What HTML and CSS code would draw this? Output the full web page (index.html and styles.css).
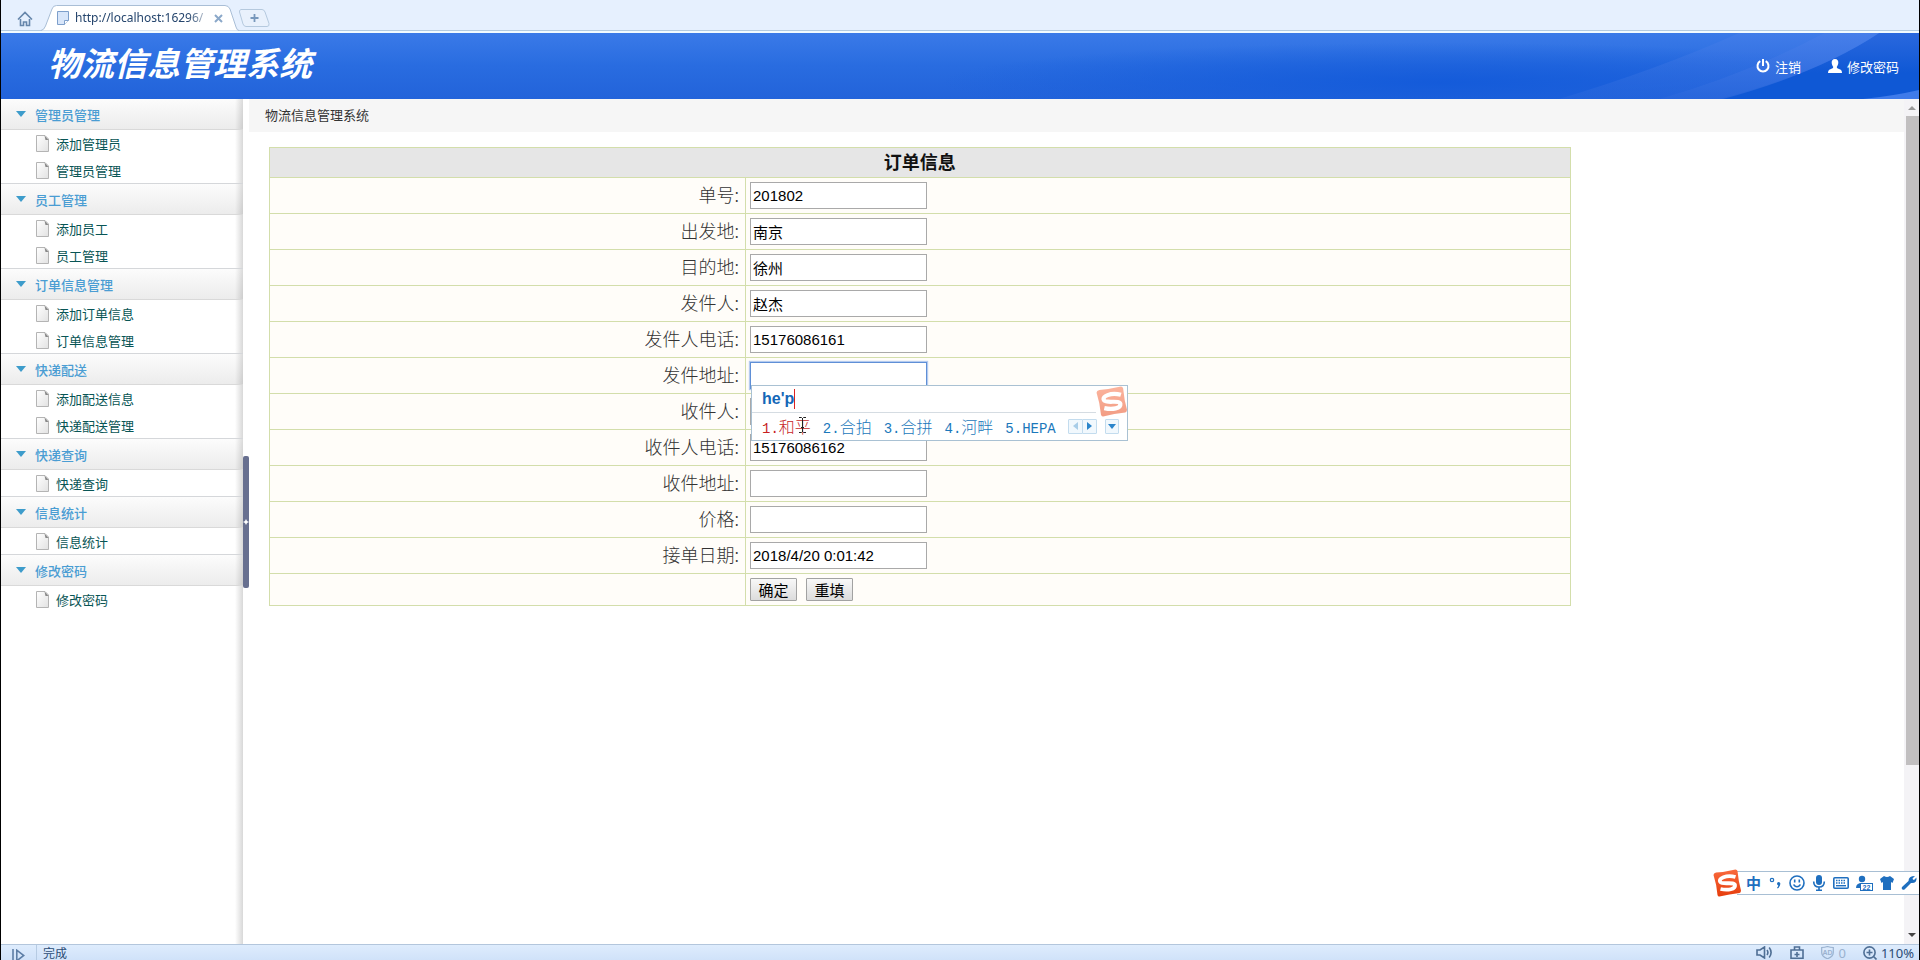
FILE: index.html
```html
<!DOCTYPE html>
<html lang="zh-CN">
<head>
<meta charset="utf-8">
<title>物流信息管理系统</title>
<link rel="stylesheet" href="styles.css">
</head>
<body>
<svg class="defs" aria-hidden="true">
  <linearGradient id="paper" x1="0" y1="0" x2="1" y2="1"><stop offset="0" stop-color="#fff"/><stop offset="1" stop-color="#e2e2e2"/></linearGradient>
  <linearGradient id="sogou" x1="0" y1="0" x2="0" y2="1"><stop offset="0" stop-color="#f96a3d"/><stop offset="1" stop-color="#e63d0c"/></linearGradient>
  <symbol id="page" viewBox="0 0 13 17"><path d="M.5.5h8.500l3.500 3.500v12.500H.5z" fill="url(#paper)" stroke="#b4b4b4"/><path d="M8.500.5l4 4.500H9.500z" fill="#888"/></symbol>
  <symbol id="s-logo" viewBox="0 0 28 28"><path d="M3 3.500Q12 3 22.500.5q1.500 0 2 1.500 1 11 3.500 19.500 0 2-1.500 2.500-10 1-20 3.500-1.500.3-2-1.500Q3.500 15 .5 6 .5 4 3 3.500z" fill="url(#sogou)"/><path d="M22.500 8Q16 6 10.500 8.200C5 10.500 6 14 11 14.200c5 .3 10.500-.8 11 2 .5 4-7 5.500-14.500 3.800" fill="none" stroke="#fff" stroke-width="3.800"/></symbol>
</svg>

<div class="window">
  <div class="tabs">
    <button class="plain home" aria-label="主页"><svg width="16" height="16" viewBox="0 0 16 16"><path d="M1 8.500L8 1.500l7 7M3.500 8v6.500h3V11h3v3.500h3V8" fill="none" stroke="#6686ab" stroke-width="1.600"/></svg></button>
    <div class="tab">
      <svg class="tab-shape" viewBox="0 0 198 26" preserveAspectRatio="none"><path d="M0 25.500Q3 25 4.500 21L11 4q1-3.500 4.500-3.500H184q3.500 0 5 3.500l6 18q1 3.500 3 3.500" fill="#fff" stroke="#a9bed6"/></svg>
      <svg width="12" height="14" viewBox="0 0 12 14"><path d="M.5.5h11v9l-4 4h-7z" fill="#d8e6fa" stroke="#7d9fcb"/><path d="M11.500 9.500h-4v4" fill="#fff" stroke="#7d9fcb"/></svg>
      <span class="url">http://localhost:16296/</span>
      <button class="plain close" aria-label="关闭标签"><svg width="9" height="9" viewBox="0 0 9 9"><path d="M1 1l7 7M8 1L1 8" stroke="#8ba8c9" stroke-width="2"/></svg></button>
    </div>
    <button class="plain newtab" aria-label="新标签"><svg width="31" height="18" viewBox="0 0 31 18"><path d="M2 .5h21q2 0 3 2.500l4 11.500q.5 3-2 3H7q-2 0-3-2.500L.5 3Q0 1 2 .5z" fill="#e9f1fc" stroke="#b5c9de"/><path d="M15.500 5v8M11.500 9h8" stroke="#7898bc" stroke-width="1.800"/></svg></button>
  </div>

  <header class="banner">
    <svg class="rays" viewBox="0 0 420 66" preserveAspectRatio="none"><defs><linearGradient id="ray" x1="0" y1="0" x2="0" y2="1"><stop offset="0" stop-color="#4a80ea"/><stop offset="1" stop-color="#2b68dc"/></linearGradient><linearGradient id="deep" x1="0" y1="0" x2="0" y2="1"><stop offset="0" stop-color="#2a68de"/><stop offset=".6" stop-color="#0f58d5"/></linearGradient></defs><path d="M220 66Q320 40 380 0h40v66z" fill="url(#deep)"/><path d="M160 66Q250 40 325 0h55Q320 40 224 66z" fill="url(#ray)" opacity=".8"/><path d="M60 66Q160 36 240 0h85Q250 40 160 66z" fill="url(#ray)" opacity=".45"/><path d="M364 66q30-3 56-9v9z" fill="#3f7bea"/></svg>
    <h1>物流信息管理系统</h1>
    <nav class="account">
      <a href="#"><svg width="14" height="14" viewBox="0 0 14 14"><path d="M4.300 2.200a5.500 5.500 0 1 0 5.400 0M7 0v7" fill="none" stroke="#fff" stroke-width="2"/></svg>注销</a>
      <a href="#"><svg width="14" height="14" viewBox="0 0 14 14"><path d="M7 0c2.500 0 3.500 1.700 3.300 4-.2 2-1 3-1.500 3.800 0 1.500.7 1.700 2.200 2.200 2 .7 3 1.500 3 4H0c0-2.500 1-3.300 3-4 1.500-.5 2.200-.7 2.200-2.200C4.700 7 3.900 6 3.700 4 3.500 1.700 4.500 0 7 0z" fill="#fff"/></svg>修改密码</a>
    </nav>
  </header>

  <div class="body">
    <aside class="sidebar">
      <section><h2>管理员管理</h2><ul><li><a href="#"><svg class="page"><use href="#page"/></svg>添加管理员</a></li><li><a href="#"><svg class="page"><use href="#page"/></svg>管理员管理</a></li></ul></section>
      <section><h2>员工管理</h2><ul><li><a href="#"><svg class="page"><use href="#page"/></svg>添加员工</a></li><li><a href="#"><svg class="page"><use href="#page"/></svg>员工管理</a></li></ul></section>
      <section><h2>订单信息管理</h2><ul><li><a href="#"><svg class="page"><use href="#page"/></svg>添加订单信息</a></li><li><a href="#"><svg class="page"><use href="#page"/></svg>订单信息管理</a></li></ul></section>
      <section><h2>快递配送</h2><ul><li><a href="#"><svg class="page"><use href="#page"/></svg>添加配送信息</a></li><li><a href="#"><svg class="page"><use href="#page"/></svg>快递配送管理</a></li></ul></section>
      <section><h2>快递查询</h2><ul><li><a href="#"><svg class="page"><use href="#page"/></svg>快递查询</a></li></ul></section>
      <section><h2>信息统计</h2><ul><li><a href="#"><svg class="page"><use href="#page"/></svg>信息统计</a></li></ul></section>
      <section><h2>修改密码</h2><ul><li><a href="#"><svg class="page"><use href="#page"/></svg>修改密码</a></li></ul></section>
    </aside>
    <div class="splitter"><button class="plain grip" aria-label="收起菜单"><svg width="6" height="6" viewBox="0 0 6 6"><path d="M3 0l1 2 2 1-2 1-1 2-1-2-2-1 2-1z" fill="#fff"/></svg></button></div>

    <main class="content">
      <div class="crumb">物流信息管理系统</div>
      <form class="order">
        <table>
          <colgroup><col class="names"><col></colgroup>
          <thead><tr><th colspan="2">订单信息</th></tr></thead>
          <tbody>
            <tr><td><label for="no">单号:</label></td><td><input id="no" value="201802"></td></tr>
            <tr><td><label for="from">出发地:</label></td><td><input id="from" value="南京"></td></tr>
            <tr><td><label for="to">目的地:</label></td><td><input id="to" value="徐州"></td></tr>
            <tr><td><label for="sender">发件人:</label></td><td><input id="sender" value="赵杰"></td></tr>
            <tr><td><label for="stel">发件人电话:</label></td><td><input id="stel" value="15176086161"></td></tr>
            <tr><td><label for="saddr">发件地址:</label></td><td><div class="field"><input id="saddr" class="active">
              <div class="ime">
                <div class="typed"><span>he'p</span></div>
                <svg class="ime-logo"><use href="#s-logo"/></svg>
                <div class="picks">
                  <span class="first"><i>1.</i>和平</span><span><i>2.</i>合拍</span><span><i>3.</i>合拼</span><span><i>4.</i>河畔</span><span><i>5.HEPA</i></span>
                  <div class="pager"><button type="button" class="plain" aria-label="上一页"><svg width="5" height="8" viewBox="0 0 5 8"><path d="M5 0v8L0 4z" fill="#a8cde8"/></svg></button><button type="button" class="plain" aria-label="下一页"><svg width="5" height="8" viewBox="0 0 5 8"><path d="M0 0v8l5-4z" fill="#2b85cb"/></svg></button></div>
                  <button type="button" class="plain more" aria-label="更多"><svg width="8" height="5" viewBox="0 0 8 5"><path d="M0 0h8L4 5z" fill="#2b85cb"/></svg></button>
                </div>
                <svg class="beam" viewBox="0 0 9 16"><path d="M1 .5h2.500l1 1 1-1H8M4.500 1v14M1 15.500h2.500l1-1 1 1H8M3 10.500h3" fill="none" stroke="#222"/></svg>
              </div></div></td></tr>
            <tr><td><label for="receiver">收件人:</label></td><td><input id="receiver"></td></tr>
            <tr><td><label for="rtel">收件人电话:</label></td><td><input id="rtel" value="15176086162"></td></tr>
            <tr><td><label for="raddr">收件地址:</label></td><td><input id="raddr"></td></tr>
            <tr><td><label for="price">价格:</label></td><td><input id="price"></td></tr>
            <tr><td><label for="date">接单日期:</label></td><td><input id="date" value="2018/4/20 0:01:42"></td></tr>
            <tr class="actions"><td></td><td><div class="buttons"><button type="button">确定</button><button type="button">重填</button></div></td></tr>
          </tbody>
        </table>
      </form>
    </main>
    <div class="scroll">
      <svg width="8" height="4" viewBox="0 0 8 4"><path d="M0 4h8L4 0z" fill="#999"/></svg>
      <div class="track"><div class="thumb"></div></div>
      <svg width="8" height="4" viewBox="0 0 8 4"><path d="M0 0h8L4 4z" fill="#444"/></svg>
    </div>
    <div class="ime-bar">
      <svg class="bar-logo"><use href="#s-logo"/></svg>
      <b>中</b>
      <svg width="14" height="14" viewBox="0 0 14 14"><circle cx="4" cy="4" r="1.700" fill="none" stroke="#1f6fbf" stroke-width="1.200"/><path d="M10.500 6a1.800 1.800 0 0 1 1.800 2q0 2.500-2.500 4.500l-.8-.7q1.300-1.300 1.300-2.300a1.800 1.800 0 0 1 .2-3.500z" fill="#1f6fbf"/></svg>
      <svg width="16" height="16" viewBox="0 0 16 16"><circle cx="8" cy="8" r="7" fill="none" stroke="#1f6fbf" stroke-width="1.600"/><path d="M4.500 9.500q3.500 4.500 7 0" fill="none" stroke="#1f6fbf" stroke-width="1.400"/><path d="M5.700 4.500v3M10.300 4.500v3" stroke="#1f6fbf" stroke-width="1.600"/></svg>
      <svg width="14" height="16" viewBox="0 0 14 16"><rect x="4" y="0" width="6" height="10" rx="3" fill="#1f6fbf"/><path d="M1.700 6.500q0 5.500 5.300 5.500t5.300-5.500M7 12v3M4 15.200h6" fill="none" stroke="#1f6fbf" stroke-width="1.600"/></svg>
      <svg width="16" height="12" viewBox="0 0 16 12"><rect x=".8" y=".8" width="14.400" height="10.400" rx="1" fill="none" stroke="#1f6fbf" stroke-width="1.600"/><path d="M3 3.500h10M3 6h10" stroke="#1f6fbf" stroke-width="1.400" stroke-dasharray="1.500 1"/><path d="M3 8.700h10" stroke="#1f6fbf" stroke-width="1.400"/></svg>
      <svg width="17" height="16" viewBox="0 0 17 16"><circle cx="6" cy="4" r="3.200" fill="#1f6fbf"/><path d="M0 13q0-5 6-5 4 0 5.500 2V13z" fill="#1f6fbf"/><rect x="4.500" y="8.500" width="12" height="7" fill="#fff" stroke="#1f6fbf"/><text class="badge" x="10.500" y="15" text-anchor="middle">22</text></svg>
      <svg width="14" height="14" viewBox="0 0 14 14"><path d="M4 0q3 2 6 0l4 3-1.500 4L11 6v8H3V6L1.500 7 0 3z" fill="#1f6fbf"/></svg>
      <svg width="16" height="16" viewBox="0 0 16 16"><path d="M14 1l-2.500 2.500.5 1 1 .5L15.500 2.500Q16 8 11 8l-1 0-6.500 6.500a1.800 1.800 0 0 1-2.500-2.500L7.500 6Q7.500 1 14 1z" fill="#1f6fbf"/></svg>
    </div>
  </div>

  <footer class="status">
    <button class="plain side" aria-label="侧栏"><svg width="13" height="13" viewBox="0 0 13 13"><path d="M1 0v13M4.800 1.200v10.600l7-5.300z" fill="none" stroke="#5d7ea6" stroke-width="1.600"/></svg></button>
    <span class="done">完成</span>
    <div class="tools">
      <svg width="17" height="13" viewBox="0 0 17 13"><path d="M1 4h3l4.500-3v11L4 9H1zM11 4q1.800 2.500 0 5M13.200 1.500q3.800 5 0 10" fill="none" stroke="#4f6f95" stroke-width="1.600"/></svg>
      <svg width="14" height="13" viewBox="0 0 14 13"><path d="M1 4h12v8.200H1zM4.500 4V1h5v3M7 6v5M4.500 8.500h5" fill="none" stroke="#4f6f95" stroke-width="1.600"/></svg>
      <span class="ad"><svg width="13" height="13" viewBox="0 0 13 13"><path d="M.7 1.500q3 0 5.800-1 2.800 1 5.800 1v5q0 4-5.800 6.300Q.7 10.500.7 6.500z" fill="none" stroke="#9ab2cf" stroke-width="1.200"/><text class="badge" x="6.500" y="9" text-anchor="middle">AD</text></svg>0</span>
      <span class="zoom"><svg width="14" height="14" viewBox="0 0 14 14"><path d="M6.500 3.500v6M3.500 6.500h6M10.500 10.500l3 3" stroke="#4f6f95" stroke-width="1.600"/><circle cx="6.500" cy="6.500" r="5.600" fill="none" stroke="#4f6f95" stroke-width="1.600"/></svg>110%</span>
    </div>
  </footer>
</div>
</body>
</html>
```
FILE: styles.css
```css
* { box-sizing: border-box; }
body { margin: 0; font: 13px "Liberation Sans", "Noto Sans CJK SC", sans-serif; background: #fff; }
.defs { position: absolute; width: 0; height: 0; }
svg { flex: none; display: block; }
.plain { border: 0; padding: 0; background: none; display: flex; align-items: center; justify-content: center; }
a { color: inherit; text-decoration: none; }
ul { list-style: none; margin: 0; padding: 0; }

.window { height: 100vh; display: flex; flex-direction: column; overflow: hidden; border: solid #000; border-width: 0 1px; }

.tabs { flex: none; height: 33px; display: flex; align-items: flex-start; background: linear-gradient(#e6f0fe 30px, #b4cbe0 30px, #b4cbe0 31px, #f2fbff 31px); }
.home { margin: 11px 8px 0 16px; }
.tab { position: relative; width: 198px; height: 26px; margin-top: 5px; padding: 0 16px; display: flex; align-items: center; gap: 6px; }
.tab-shape { position: absolute; inset: 0; width: 100%; height: 100%; }
.tab > :not(.tab-shape) { position: relative; }
.url { flex: 1; white-space: nowrap; font: 12px/18px "Noto Sans", sans-serif; color: #25456d; -webkit-mask-image: linear-gradient(90deg, #000 85%, #0003); mask-image: linear-gradient(90deg, #000 85%, #0003); }
.newtab { margin-top: 9px; }

.banner { position: relative; flex: none; height: 66px; padding: 0 20px 0 47px; display: flex; align-items: center; justify-content: space-between; background: radial-gradient(ellipse 500px 40px at 75% 75%, #145bda, transparent), linear-gradient(#3a7ae8, #296ce0 50%, #2263da); color: #fff; }
.rays { position: absolute; right: 0; top: 0; width: 420px; height: 100%; }
.banner h1 { margin: 0 0 8px; font: italic bold 33px/40px "Noto Sans CJK SC", sans-serif; }
.account { position: relative; display: flex; gap: 27px; }
.account a { display: flex; align-items: center; gap: 5px; }

.body { position: relative; flex: 1; min-height: 0; display: flex; }
.sidebar { flex: none; width: 242px; background: linear-gradient(90deg, transparent 234px, #d8d8d8); }
.sidebar section + section { border-top: 1px solid #d5d7da; }
.sidebar h2 { margin: 0; height: 30px; padding-left: 15px; display: flex; align-items: center; gap: 9px; font-size: 13px; font-weight: 500; color: #4a9dd3; background: linear-gradient(90deg, transparent 234px, #0002), linear-gradient(#fcfcfc, #ececec); }
.sidebar h2::before { content: ""; border: solid transparent; border-width: 6px 5px 0; border-top-color: #3d9ccb; }
.sidebar ul { border-top: 1px solid #d9d9d9; display: flex; flex-direction: column; gap: 1px; }
.sidebar a { height: 26px; padding-left: 35px; display: flex; align-items: center; gap: 7px; color: #085555; }
.page { width: 13px; height: 17px; }
.splitter { flex: none; width: 6px; display: flex; align-items: center; }
.grip { width: 6px; height: 132px; background: #687090; border-radius: 2px; }

.content { flex: 1; min-width: 0; }
.crumb { height: 33px; padding: 0 16px; line-height: 34px; background: #f6f6f6; color: #333; }
.order { padding: 15px 8px 0 20px; }
table { width: 80%; table-layout: fixed; border-collapse: collapse; background: #fffdf9; }
.names { width: 36.6%; }
th, td { border: 1px solid #d3deab; padding: 0 4px; height: 36px; font: 300 18px/26px "Noto Sans CJK SC", serif; color: #333; }
th { height: 30px; padding-bottom: 3px; background: #e6e6e6; font-weight: 700; color: #111; }
td:first-child { padding: 0 6px 3px; text-align: right; }
.actions td { height: 32px; }
td input { display: block; width: 177px; height: 27px; padding: 0 2px; border: 1px solid #a9a9a9; background: #fff; font: 15px "Liberation Sans", "Noto Sans CJK SC", sans-serif; color: #000; outline: 0; }
td input.active { border-color: #5f8fd6; box-shadow: 0 0 1px 1px #b4cbef; }
.buttons { display: flex; gap: 9px; }
.buttons button { width: 47px; height: 23px; padding: 0; border: 1px solid #a2a2a2; border-radius: 1px; background: linear-gradient(#f8f8f8, #dcdcdc); font: 15px/20px "Noto Sans CJK SC", sans-serif; color: #000; }

.field { position: relative; }
.ime { position: absolute; z-index: 2; left: 1px; top: 23px; width: 377px; height: 56px; padding: 0 8px 0 10px; border: 1px solid #a9c1d3; background: #fff; text-align: left; }
.typed { height: 27px; margin: 0 23px 0 -10px; padding-left: 10px; border-bottom: 1px solid #d5dce2; display: flex; align-items: center; font: bold 16px/20px "Liberation Sans", sans-serif; color: #1467b8; }
.typed span { border-right: 1px solid #d22; }
.ime-logo { position: absolute; right: 0; top: 0; width: 31px; height: 31px; opacity: .5; }
.picks { height: 26px; display: flex; align-items: center; gap: 12px; font: 300 16px/20px "Noto Sans CJK SC", sans-serif; color: #1b78bb; white-space: nowrap; }
.picks .first { color: #c71f1f; }
.picks i { font: 14px "Liberation Mono", monospace; }
.pager { display: flex; }
.pager button, .more { width: 15px; height: 15px; border: 1px solid #c3dcee; border-radius: 1px; background: #f1f8fd; }
.pager button + button { margin-left: -1px; }
.more { margin-left: -4px; }
.beam { position: absolute; left: 46px; top: 31px; width: 9px; height: 16px; }

.scroll { flex: none; width: 15px; display: flex; flex-direction: column; align-items: center; background: #f4f3f6; padding: 7px 0; gap: 6px; }
.track { flex: 1; width: 100%; padding-left: 2px; }
.thumb { height: 80%; background: #c1bfc0; }
.ime-bar { position: absolute; z-index: 3; right: 0; bottom: 49px; height: 24px; padding: 0 2px 0 4px; border: solid #a8bfd4; border-width: 1px 0; background: #fff; display: flex; align-items: center; gap: 7px; color: #1f6fbf; }
.bar-logo { width: 28px; height: 28px; margin: 0 -2px 0 -28px; }
.ime-bar b { font: bold 15px/20px "Noto Sans CJK SC", sans-serif; }
.badge { font: bold 7px "Liberation Sans", sans-serif; fill: currentColor; }

.status { flex: none; height: 16px; display: flex; align-items: flex-start; border-top: 1px solid #b3c6dc; background: linear-gradient(#deecfd, #d0e2f9); color: #2b4c75; }
.side { width: 36px; height: 15px; padding-top: 5px; overflow: hidden; border-right: 1px solid #b6cbe3; }
.done { margin-left: 6px; font: 12px/15px "Noto Sans CJK SC", sans-serif; }
.tools { margin: 1px 5px 0 auto; display: flex; gap: 17px; font: 13px/14px "Noto Sans", sans-serif; }
.ad, .zoom { display: flex; gap: 4px; }
.ad { color: #9ab2cf; }
```
